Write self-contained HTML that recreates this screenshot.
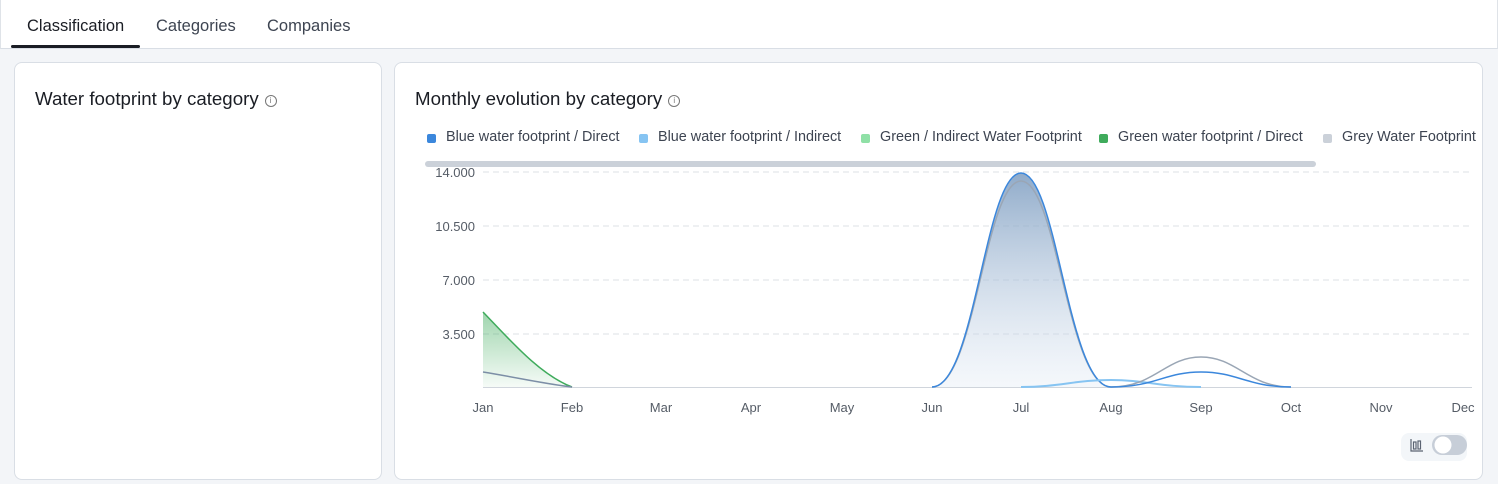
<!DOCTYPE html>
<html><head><style>
body{margin:0;width:1498px;height:484px;background:#f3f5f8;font-family:"Liberation Sans",sans-serif;overflow:hidden;position:relative}
.top{position:absolute;left:0;top:0;width:1496px;height:48px;background:#fff;border:1px solid #dfe3e8;border-top:none;border-bottom:1px solid #d9dee5}
.tab{position:absolute;top:17px;font-size:16.5px;color:#3d4451}
.card{position:absolute;background:#fff;border:1px solid #d9dee5;border-radius:8px}
h2{position:absolute;margin:0;font-size:18.7px;font-weight:normal;color:#1a1d24}
.i{display:inline-block;width:10px;height:10px;border:1px solid #777;border-radius:50%;font-size:8px;text-align:center;line-height:10px;color:#777;vertical-align:2px;margin-left:6px}
.lg{position:absolute;top:129px;font-size:14.4px;color:#3d4451;white-space:nowrap}
.lg span{position:absolute;left:-19px;top:5px;width:9px;height:9px;border-radius:2px}
</style></head><body>
<div class="top">
<div class="tab" style="left:26px;color:#1a1d24">Classification</div>
<div class="tab" style="left:155px">Categories</div>
<div class="tab" style="left:266px">Companies</div>
<div style="position:absolute;left:10px;top:45px;width:129px;height:3px;background:#1a1d24;border-radius:2px"></div>
</div>
<div class="card" style="left:14px;top:62px;width:366px;height:416px"></div>
<h2 style="left:35px;top:88px">Water footprint by category<span class="i">i</span></h2>
<div class="card" style="left:394px;top:62px;width:1087px;height:416px;overflow:hidden">
<div style="position:absolute;left:1006px;top:370px;width:66px;height:28px;background:#f3f6f9;border-radius:8px"></div>
</div>
<h2 style="left:415px;top:88px">Monthly evolution by category<span class="i">i</span></h2>
<div style="position:absolute;left:395px;top:0;width:1085px;height:160px;overflow:hidden">
<div class="lg" style="left:51px"><span style="background:#3b87dc"></span>Blue water footprint / Direct</div>
<div class="lg" style="left:263px"><span style="background:#86c4f2"></span>Blue water footprint / Indirect</div>
<div class="lg" style="left:485px"><span style="background:#8fe0a6"></span>Green / Indirect Water Footprint</div>
<div class="lg" style="left:723px"><span style="background:#3fab5c"></span>Green water footprint / Direct</div>
<div class="lg" style="left:947px"><span style="background:#cbd1d9"></span>Grey Water Footprint</div>
</div>
<svg style="position:absolute;left:0;top:0" width="1498" height="484">
<defs>
<linearGradient id="gb" x1="0" y1="0" x2="0" y2="1"><stop offset="0" stop-color="#7c9cc0" stop-opacity=".85"/><stop offset="1" stop-color="#dce6f2" stop-opacity=".3"/></linearGradient>
<linearGradient id="gg" x1="0" y1="0" x2="0" y2="1"><stop offset="0" stop-color="#3fab5c" stop-opacity=".5"/><stop offset="1" stop-color="#3fab5c" stop-opacity=".05"/></linearGradient>
</defs>
<rect x="425" y="161" width="891" height="6" rx="3" fill="#cbd1d9"/>
<g stroke="#dde1e6" stroke-dasharray="6,4">
<line x1="483" y1="172" x2="1470" y2="172"/><line x1="483" y1="226" x2="1470" y2="226"/><line x1="483" y1="280" x2="1470" y2="280"/><line x1="483" y1="334" x2="1470" y2="334"/></g>
<line x1="483" y1="387.5" x2="1472" y2="387.5" stroke="#d0d5dc"/>
<g font-size="13" fill="#555c66" text-anchor="end"><text x="475" y="177">14.000</text><text x="475" y="231">10.500</text><text x="475" y="285">7.000</text><text x="475" y="339">3.500</text></g>
<g font-size="13" fill="#555c66" text-anchor="middle">
<text x="483" y="412">Jan</text><text x="572" y="412">Feb</text><text x="661" y="412">Mar</text><text x="751" y="412">Apr</text><text x="842" y="412">May</text><text x="932" y="412">Jun</text><text x="1021" y="412">Jul</text><text x="1111" y="412">Aug</text><text x="1201" y="412">Sep</text><text x="1291" y="412">Oct</text><text x="1381" y="412">Nov</text><text x="1463" y="412">Dec</text></g>
<path d="M483 312 C510 340 540 375 572 387 L483 387Z" fill="url(#gg)"/>
<path d="M483 312 C510 340 540 375 572 387" fill="none" stroke="#3fab5c" stroke-width="1.5"/>
<path d="M483 372 C520 378 545 384 572 387" fill="none" stroke="#7c8ea6" stroke-width="1.5"/>
<path d="M932 387 C975 387 985 173 1021 173 C1057 173 1068 387 1111 387Z" fill="url(#gb)"/>
<path d="M932 387 C975 387 985 181 1021 181 C1057 181 1068 387 1111 387" fill="none" stroke="#9aa6b5" stroke-width="1.5"/>
<path d="M932 387 C975 387 985 173 1021 173 C1057 173 1068 387 1111 387" fill="none" stroke="#3b87dc" stroke-width="1.5"/>
<path d="M1021 387 C1060 387 1075 380 1111 380 C1145 380 1160 387 1201 387" fill="none" stroke="#86c4f2" stroke-width="2"/>
<path d="M1111 387 C1155 387 1165 357 1201 357 C1237 357 1248 387 1291 387" fill="none" stroke="#9aa6b5" stroke-width="1.5"/>
<path d="M1111 387 C1155 387 1165 372 1201 372 C1237 372 1248 387 1291 387" fill="none" stroke="#3b87dc" stroke-width="1.5"/>
<g stroke="#5b6472" stroke-width="1.2" fill="none"><path d="M1411 439 V451 H1423"/><rect x="1413.5" y="442" width="2.5" height="7"/><rect x="1418" y="441" width="2.5" height="8"/></g>
<rect x="1432" y="435" width="35" height="20" rx="10" fill="#c7ced8"/>
<circle cx="1443" cy="445" r="8.5" fill="#fff"/>
</svg>
</body></html>
